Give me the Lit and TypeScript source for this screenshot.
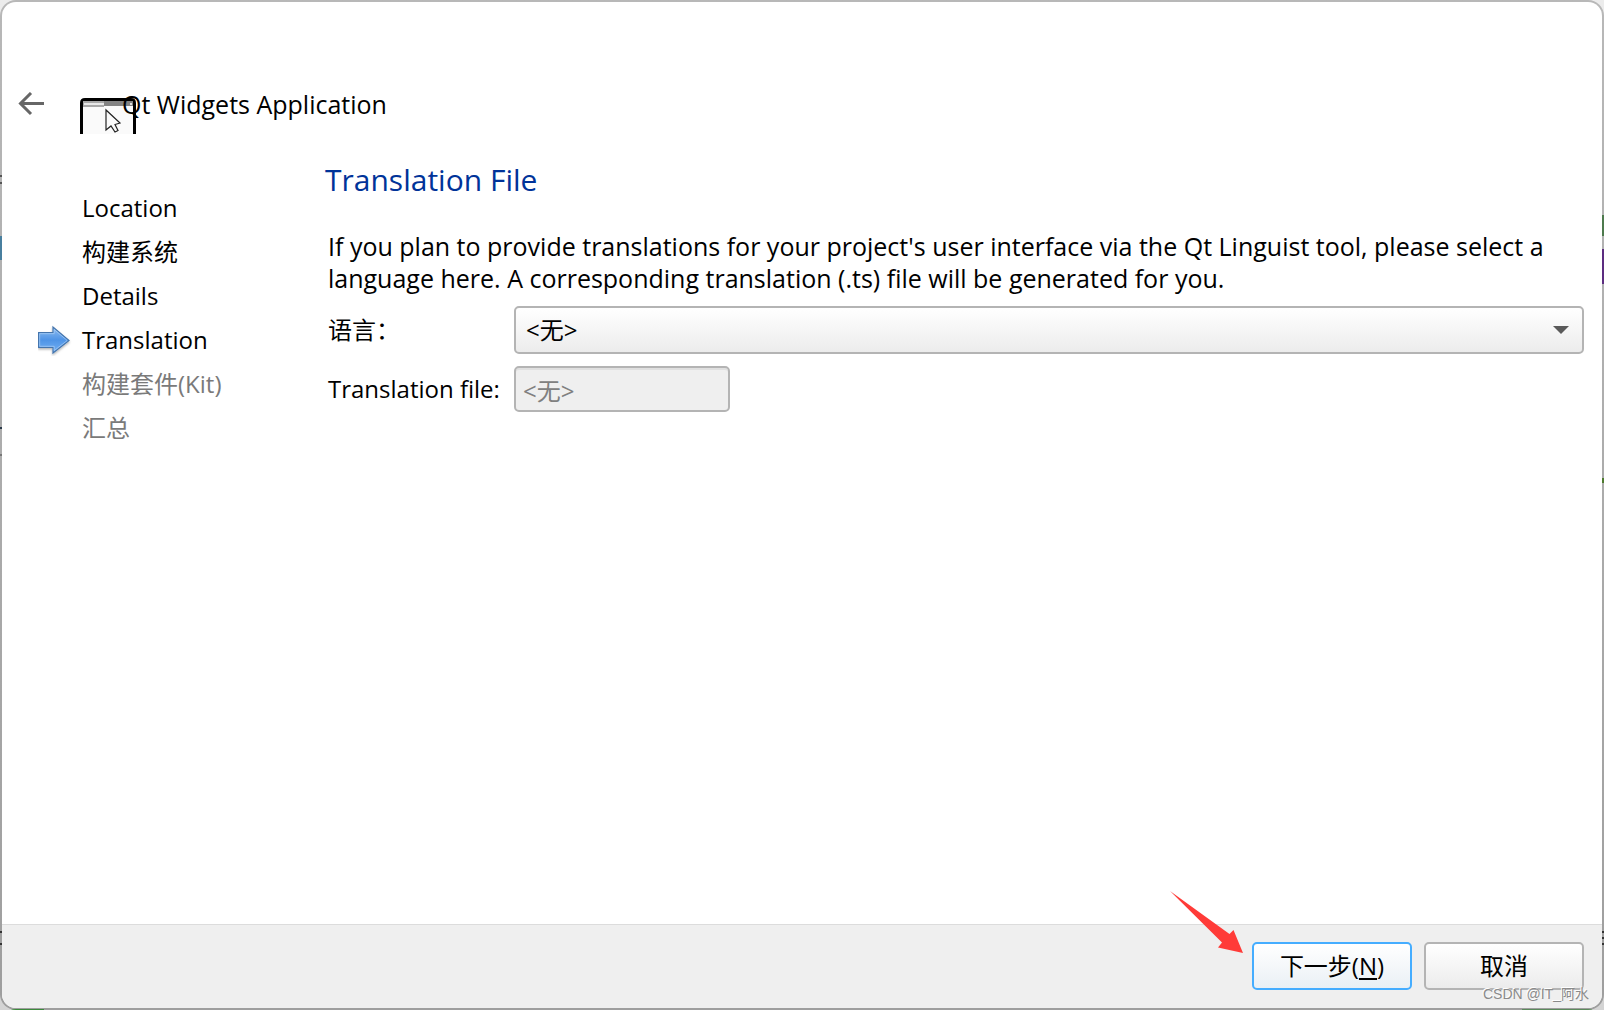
import { LitElement, html, css, svg } from "lit";
import { customElement, state } from "lit/decorators.js";
import { classMap } from "lit/directives/class-map.js";

interface Step {
  label: string;
  state: "done" | "current" | "pending";
}

const backIcon = svg`<svg class="icon" width="28" height="24" viewBox="0 0 28 24" aria-hidden="true">
  <path d="M26 11.500H3M13 1 2.500 11.500l10.500 10.500" fill="none" stroke="#666" stroke-width="3"/>
</svg>`;

const windowIcon = svg`<svg class="icon" width="56" height="36" viewBox="0 0 56 36" aria-hidden="true">
  <path d="M1.500 36V5Q1.500 1.500 5 1.500H51Q54.500 1.500 54.500 5V36" fill="#fafafa" stroke="#000" stroke-width="3"/>
  <path d="M3 3H24V9H3Z" fill="#a8a8a8"/>
  <path d="M4 5H24V7H4Z" fill="#e8e8e8"/>
  <path d="M24 3H53V8H24Z" fill="#838383"/>
  <path d="M50 5h2v2h-2z" fill="#ddd"/>
  <path d="M26 12V32L31 28L35 34L38 32.500L35 26.500L40 25Z" fill="#fafafa" stroke="#222" stroke-width="1.200"/>
</svg>`;

const currentIcon = svg`<svg class="icon" width="34" height="32" viewBox="0 0 34 32" aria-hidden="true">
  <defs>
    <linearGradient id="arrow-fill" x1="0" y1="0" x2="0" y2="1">
      <stop offset="0" stop-color="#8fbdf0"/><stop offset=".5" stop-color="#4f94e6"/><stop offset="1" stop-color="#75b2f5"/>
    </linearGradient>
    <filter id="arrow-shadow" x="-10%" y="-10%" width="120%" height="130%">
      <feDropShadow dx="0" dy="1.500" stdDeviation="1" flood-color="#000" flood-opacity=".3"/>
    </filter>
  </defs>
  <path d="M.500 8.500H15V3L31 16.500 15 29V23.500H.500Z" fill="url(#arrow-fill)" stroke="#4475ad" stroke-width="1.200" filter="url(#arrow-shadow)"/>
  <path d="M1.700 9.700H16.200V5.500L29.200 16.500 16.200 26.600V22.300H1.700Z" fill="none" stroke="#a9cdf5" stroke-width="1" opacity=".7"/>
</svg>`;

const caretIcon = svg`<svg class="caret" width="16" height="8" viewBox="0 0 16 8" aria-hidden="true">
  <path d="M0 0H16L8 8Z" fill="#5a5a5a"/>
</svg>`;

const pointerArrow = svg`<svg class="pointer" width="74" height="62" viewBox="0 0 74 62" aria-hidden="true">
  <path d="M0 0 59.500 43 63.500 39 73 62 48 56.500 52 51.500Z" fill="#ff3b38"/>
</svg>`;

@customElement("app-root")
export class AppRoot extends LitElement {
  static styles = css`
    :host {
      display: block;
      box-sizing: border-box;
      min-height: 100vh;
      font: 24px/32px "Open Sans", "Noto Sans CJK SC", sans-serif;
      color: #000;
      background: linear-gradient(#ececec, #d4d4d4);
    }
    * { box-sizing: border-box; }
    .frame {
      min-height: 100vh;
      display: flex;
      padding: 2px;
      border-radius: 16px;
      background:
        linear-gradient(#555, #555) 0 175px / 2px 2px no-repeat,
        linear-gradient(#555, #555) 0 182px / 2px 2px no-repeat,
        linear-gradient(#487f9f, #487f9f) 0 236px / 2px 24px no-repeat,
        linear-gradient(#2b3a4a, #2b3a4a) 0 427px / 2px 2px no-repeat,
        linear-gradient(#777, #777) 0 454px / 2px 2px no-repeat,
        linear-gradient(#333, #333) 0 931px / 2px 2px no-repeat,
        linear-gradient(#333, #333) 0 943px / 2px 2px no-repeat,
        linear-gradient(#4d7a4d, #4d7a4d) 100% 215px / 2px 21px no-repeat,
        linear-gradient(#5c2d80, #5c2d80) 100% 249px / 2px 35px no-repeat,
        linear-gradient(#4d7a2d, #4d7a2d) 100% 478px / 2px 5px no-repeat,
        linear-gradient(#333, #333) 100% 931px / 2px 2px no-repeat,
        linear-gradient(#333, #333) 100% 937px / 2px 2px no-repeat,
        linear-gradient(#333, #333) 100% 943px / 2px 2px no-repeat,
        linear-gradient(#3b8a3b, #3b8a3b) 10px 100% / 34px 1px no-repeat,
        linear-gradient(#5b8a5b, #5b8a5b) calc(100% - 12px) 100% / 70px 1px no-repeat,
        linear-gradient(#b8b8b8, #9e9e9e);
    }
    .wizard {
      flex: 1;
      display: flex;
      flex-direction: column;
      overflow: hidden;
      position: relative;
      border-radius: 14px;
      background: #fff;
    }
    .icon { display: block; }
    .header {
      display: flex;
      align-items: flex-start;
      padding: 86px 16px 0;
    }
    .back {
      padding: 4px 0;
      margin-right: 34px;
      border: 0;
      background: none;
    }
    .logo { padding-top: 10px; }
    .title {
      margin: 0 0 0 -14px;
      font: inherit;
      font-size: 25px;
      position: relative;
    }
    .main {
      flex: 1;
      display: grid;
      grid-template-columns: 287px minmax(0, 1fr);
      padding: 26px 18px 24px 36px;
    }
    .steps {
      margin: 0;
      padding: 26px 0 0;
      list-style: none;
    }
    .step {
      display: grid;
      grid-template-columns: 34px 1fr;
      column-gap: 10px;
      align-items: center;
      height: 44px;
    }
    .name { grid-column: 2; }
    .pending { color: #7a7a7a; }
    .page-title {
      margin: 0 0 30px;
      font-size: 30px;
      font-weight: 400;
      line-height: 40px;
      color: #003399;
    }
    .body { padding-left: 3px; }
    .intro {
      margin: 0 0 12px;
      font-size: 25px;
    }
    .form {
      display: grid;
      grid-template-columns: 174px minmax(0, 1fr);
      gap: 12px;
      align-items: center;
    }
    .label { white-space: nowrap; }
    .select-wrap {
      display: grid;
      align-items: center;
    }
    .select, .caret { grid-area: 1 / 1; }
    .caret {
      justify-self: end;
      margin-right: 15px;
      pointer-events: none;
    }
    .select, .input, .button {
      font: inherit;
      color: #000;
      border: 2px solid #b4b4b4;
      border-radius: 5px;
      background: linear-gradient(#fff, #ececec);
    }
    .select {
      appearance: none;
      width: 100%;
      height: 48px;
      padding: 0 40px 0 10px;
    }
    .input {
      width: 216px;
      height: 46px;
      padding: 0 7px;
      color: #808080;
      background: #efefef;
      box-shadow: inset 0 2px #e0e0e0;
    }
    .footer {
      display: flex;
      justify-content: flex-end;
      gap: 12px;
      padding: 17px 18px 18px;
      border-top: 1px solid #dcdcdc;
      background: #efefef;
    }
    .button {
      width: 160px;
      height: 48px;
      padding: 0;
    }
    .next {
      border-color: #45adff;
      background: linear-gradient(#fff, #eaf0f5);
    }
    .key {
      text-decoration: underline;
      text-decoration-thickness: 2px;
      text-underline-offset: 3px;
    }
    .pointer {
      position: absolute;
      right: 358px;
      bottom: 55px;
      pointer-events: none;
    }
    .watermark {
      position: absolute;
      right: 13px;
      bottom: 4px;
      font: 14px/20px "Liberation Sans", "Noto Sans CJK SC", sans-serif;
      color: #8a8a8a;
      text-shadow: -1px -1px #fff;
      pointer-events: none;
    }
  `;

  @state() private steps: Step[] = [
    { label: "Location", state: "done" },
    { label: "构建系统", state: "done" },
    { label: "Details", state: "done" },
    { label: "Translation", state: "current" },
    { label: "构建套件(Kit)", state: "pending" },
    { label: "汇总", state: "pending" },
  ];

  private renderStep(step: Step) {
    return html`<li class=${classMap({ step: true, pending: step.state === "pending" })}>
      ${step.state === "current" ? currentIcon : null}<span class="name">${step.label}</span>
    </li>`;
  }

  render() {
    return html`<div class="frame"><div class="wizard">
      <header class="header">
        <button class="back" type="button" aria-label="Back">${backIcon}</button>
        <span class="logo">${windowIcon}</span>
        <h1 class="title">Qt Widgets Application</h1>
      </header>
      <main class="main">
        <ol class="steps">${this.steps.map((s) => this.renderStep(s))}</ol>
        <section>
          <h2 class="page-title">Translation File</h2>
          <div class="body">
            <p class="intro">If you plan to provide translations for your project's user interface via the Qt Linguist tool, please select a language here. A corresponding translation (.ts) file will be generated for you.</p>
            <form class="form">
              <label class="label" for="language">语言：</label>
              <div class="select-wrap">
                <select class="select" id="language"><option>&lt;无&gt;</option></select>
                ${caretIcon}
              </div>
              <label class="label" for="file">Translation file:</label>
              <input class="input" id="file" type="text" value="<无>" disabled />
            </form>
          </div>
        </section>
      </main>
      <footer class="footer">
        <button class="button next" type="button">下一步(<span class="key">N</span>)</button>
        <button class="button" type="button">取消</button>
      </footer>
      ${pointerArrow}
      <span class="watermark">CSDN @IT_阿水</span>
    </div></div>`;
  }
}
